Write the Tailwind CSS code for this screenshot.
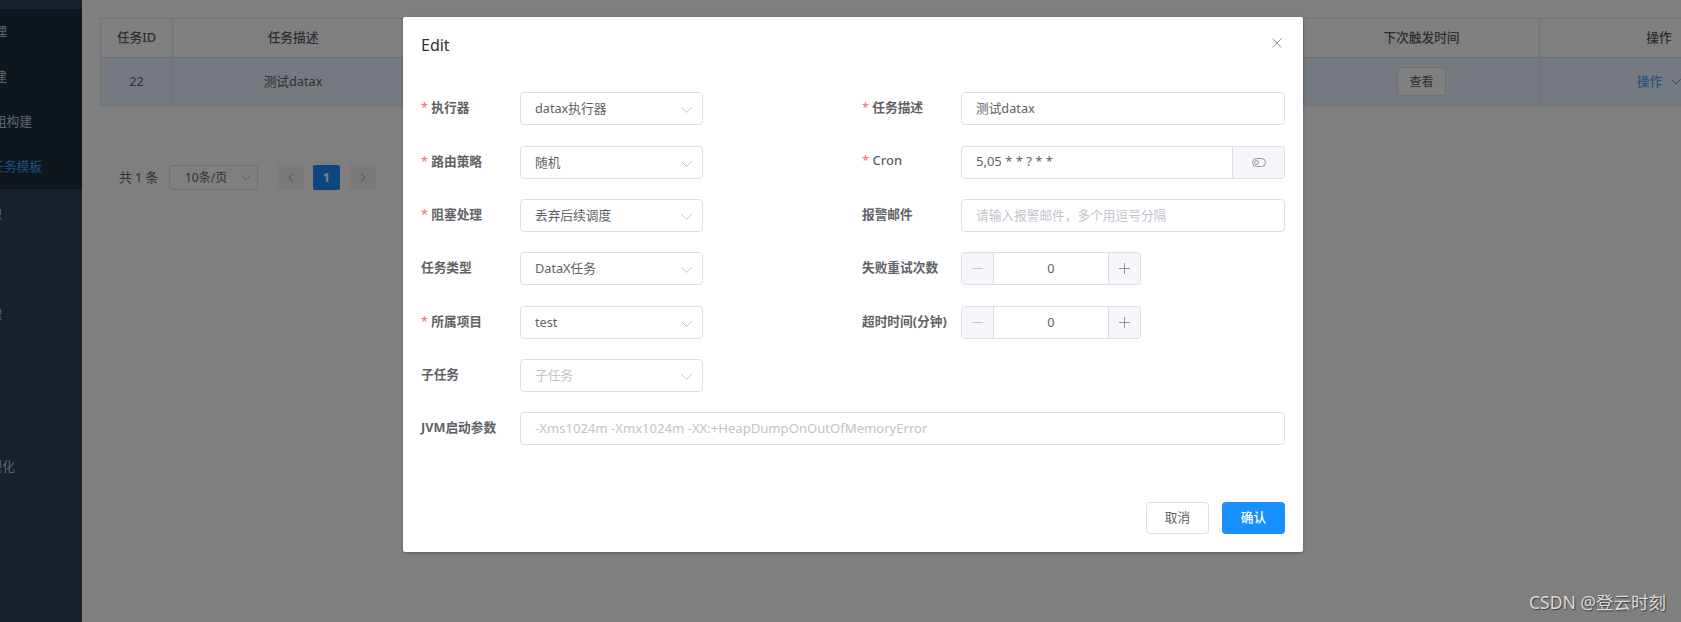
<!DOCTYPE html>
<html lang="zh-CN">
<head>
    <meta charset="UTF-8">
    <meta name="viewport" content="width=device-width, initial-scale=1.0">
    <title>任务模板</title>
    <script src="https://cdn.jsdelivr.net/npm/@tailwindcss/browser@4"></script>
</head>
<body class="bg-white font-['Noto_Sans','Noto_Sans_CJK_SC',sans-serif] text-[12.7px] text-[#606266]">
<div class="relative flex h-[622px] w-[1681px] overflow-hidden">

    <!-- sidebar, scrolled so that only the ends of the labels show -->
    <aside class="flex w-[82px] shrink-0 flex-col overflow-hidden bg-[#304156] pt-[9px] text-[#bfcbd9]">
        <div class="bg-[#1f2d3d]">
            <div class="flex h-[45px] items-center justify-end whitespace-nowrap pr-[75px]">任务管理</div>
            <div class="flex h-[45px] items-center justify-end whitespace-nowrap pr-[75px]">任务构建</div>
            <div class="flex h-[45px] items-center justify-end whitespace-nowrap pr-[50px]">任务组构建</div>
            <div class="flex h-[45px] items-center justify-end whitespace-nowrap pr-[40px] text-[#409eff]">任务模板</div>
        </div>
        <div class="flex h-[50.4px] items-center justify-end whitespace-nowrap pr-[80px]">项目管理</div>
        <div class="h-[50.4px]"></div>
        <div class="flex h-[50.4px] items-center justify-end whitespace-nowrap pr-[80px]">资源管理</div>
        <div class="h-[50.4px]"></div>
        <div class="h-[50.4px]"></div>
        <div class="flex h-[50.4px] items-center justify-end whitespace-nowrap pr-[67px]">可视化</div>
    </aside>

    <!-- job table and pagination -->
    <main class="min-w-0 flex-1 pl-[18px] pt-[18px]">
        <div class="w-[1678px] border-l border-t border-[#dfe6ec]">
            <div class="grid h-[39px] grid-cols-[72px_241px_890px_236px_239px] border-b border-[#dfe6ec] font-medium text-[#5c6066]">
                <div class="flex items-center justify-center border-r border-[#dfe6ec]">任务ID</div>
                <div class="flex items-center justify-center border-r border-[#dfe6ec]">任务描述</div>
                <div class="border-r border-[#dfe6ec]"></div>
                <div class="flex items-center justify-center border-r border-[#dfe6ec]">下次触发时间</div>
                <div class="flex items-center justify-center border-r border-[#dfe6ec]">操作</div>
            </div>
            <div class="grid h-[48px] grid-cols-[72px_241px_890px_236px_239px] border-b border-[#dfe6ec] bg-[#e8f4ff]">
                <div class="flex items-center justify-center border-r border-[#dfe6ec]">22</div>
                <div class="flex items-center justify-center border-r border-[#dfe6ec]">测试datax</div>
                <div class="border-r border-[#dfe6ec]"></div>
                <div class="flex items-center justify-center border-r border-[#dfe6ec]">
                    <button class="flex h-[29px] w-[49px] items-center justify-center rounded-[3px] border border-[#dcdfe6] bg-white text-[12px]">查看</button>
                </div>
                <div class="flex items-center justify-center gap-[9px] border-r border-[#dfe6ec] text-[#409eff]">
                    <span>操作</span>
                    <svg class="h-[6px] w-[10px]" viewBox="0 0 10 6" fill="none" stroke="currentColor"><path d="M0.5 0.5 5 5 9.5 0.5"/></svg>
                </div>
            </div>
        </div>

        <div class="ml-[19px] mt-[59px] flex h-[25px] items-center">
            <span class="w-[50px] whitespace-nowrap">共 1 条</span>
            <div class="flex h-[25px] w-[89px] items-center justify-between rounded-[3px] border border-[#dcdfe6] pl-[15px] pr-[6px]">
                <span class="whitespace-nowrap text-[12px]">10条/页</span>
                <svg class="h-[6px] w-[10px] text-[#c0c4cc]" viewBox="0 0 10 6" fill="none" stroke="currentColor"><path d="M0.5 0.5 5 5 9.5 0.5"/></svg>
            </div>
            <div class="ml-[19px] flex h-[25px] w-[27px] items-center justify-center rounded-[2px] bg-[#f4f4f5] text-[#c0c4cc]">
                <svg class="h-[9px] w-[6px]" viewBox="0 0 6 9" fill="none" stroke="currentColor" stroke-width="1.4"><path d="M5 0.5 1 4.5 5 8.5"/></svg>
            </div>
            <div class="ml-[9px] flex h-[25px] w-[27px] items-center justify-center rounded-[2px] bg-[#1890ff] font-bold text-white">1</div>
            <div class="ml-[9px] flex h-[25px] w-[27px] items-center justify-center rounded-[2px] bg-[#f4f4f5] text-[#c0c4cc]">
                <svg class="h-[9px] w-[6px]" viewBox="0 0 6 9" fill="none" stroke="currentColor" stroke-width="1.4"><path d="M1 0.5 5 4.5 1 8.5"/></svg>
            </div>
        </div>
    </main>

    <!-- dim layer -->
    <div class="absolute inset-0 bg-black/50"></div>

    <!-- Edit dialog -->
    <div class="absolute left-[403px] top-[17px] flex h-[535px] w-[900px] flex-col rounded-[2px] bg-white shadow-[0_1px_3px_rgba(0,0,0,0.3)]">
        <div class="flex h-[75.2px] shrink-0 items-start justify-between pl-[18px] pr-[21px] pt-[17px]">
            <h2 class="text-[16px] leading-[22px] text-[#303133]">Edit</h2>
            <svg class="mt-[4px] h-[10px] w-[10px] text-[#909399]" viewBox="0 0 10 10" fill="none" stroke="currentColor"><path d="M0.5 0.5 9.5 9.5M9.5 0.5 0.5 9.5"/></svg>
        </div>

        <form class="ml-[18px] grid w-[864px] grid-cols-[282px_423px] auto-rows-[33px] gap-x-[159px] gap-y-[20.35px]">
            <div class="flex items-center">
                <label class="w-[99px] shrink-0 pb-[2px] font-bold"><span class="font-normal text-[#f56c6c]">* </span>执行器</label>
                <div class="flex h-full flex-1 items-center justify-between rounded-[4px] border border-[#dcdfe6] pl-[14px] pr-[10px]">
                    <span>datax执行器</span>
                    <svg class="mt-[3px] h-[6px] w-[11px] text-[#c0c4cc]" viewBox="0 0 11 6" fill="none" stroke="currentColor"><path d="M0.5 0.5 5.5 5.5 10.5 0.5"/></svg>
                </div>
            </div>
            <div class="flex items-center">
                <label class="w-[99px] shrink-0 pb-[2px] font-bold"><span class="font-normal text-[#f56c6c]">* </span>任务描述</label>
                <div class="flex h-full flex-1 items-center rounded-[4px] border border-[#dcdfe6] pl-[14px]">测试datax</div>
            </div>

            <div class="flex items-center">
                <label class="w-[99px] shrink-0 pb-[2px] font-bold"><span class="font-normal text-[#f56c6c]">* </span>路由策略</label>
                <div class="flex h-full flex-1 items-center justify-between rounded-[4px] border border-[#dcdfe6] pl-[14px] pr-[10px]">
                    <span>随机</span>
                    <svg class="mt-[3px] h-[6px] w-[11px] text-[#c0c4cc]" viewBox="0 0 11 6" fill="none" stroke="currentColor"><path d="M0.5 0.5 5.5 5.5 10.5 0.5"/></svg>
                </div>
            </div>
            <div class="flex items-center">
                <label class="w-[99px] shrink-0 pb-[2px] text-[13px] font-medium"><span class="font-normal text-[#f56c6c]">* </span>Cron</label>
                <div class="flex h-full flex-1 rounded-[4px] border border-[#dcdfe6]">
                    <div class="flex flex-1 items-center pl-[14px] text-[13px]">5,05 * * ? * *</div>
                    <div class="flex w-[52px] items-center justify-center rounded-r-[4px] border-l border-[#dcdfe6] bg-[#f5f7fa] text-[#909399]">
                        <svg class="h-[9px] w-[14px]" viewBox="0 0 14 9" fill="none" stroke="currentColor"><rect x="0.5" y="0.5" width="13" height="8" rx="4"/><circle cx="4.5" cy="4.5" r="2"/></svg>
                    </div>
                </div>
            </div>

            <div class="flex items-center">
                <label class="w-[99px] shrink-0 pb-[2px] font-bold"><span class="font-normal text-[#f56c6c]">* </span>阻塞处理</label>
                <div class="flex h-full flex-1 items-center justify-between rounded-[4px] border border-[#dcdfe6] pl-[14px] pr-[10px]">
                    <span>丢弃后续调度</span>
                    <svg class="mt-[3px] h-[6px] w-[11px] text-[#c0c4cc]" viewBox="0 0 11 6" fill="none" stroke="currentColor"><path d="M0.5 0.5 5.5 5.5 10.5 0.5"/></svg>
                </div>
            </div>
            <div class="flex items-center">
                <label class="w-[99px] shrink-0 pb-[2px] font-bold">报警邮件</label>
                <div class="flex h-full flex-1 items-center rounded-[4px] border border-[#dcdfe6] pl-[14px] text-[#c0c4cc]">请输入报警邮件，多个用逗号分隔</div>
            </div>

            <div class="flex items-center">
                <label class="w-[99px] shrink-0 pb-[2px] font-bold">任务类型</label>
                <div class="flex h-full flex-1 items-center justify-between rounded-[4px] border border-[#dcdfe6] pl-[14px] pr-[10px]">
                    <span>DataX任务</span>
                    <svg class="mt-[3px] h-[6px] w-[11px] text-[#c0c4cc]" viewBox="0 0 11 6" fill="none" stroke="currentColor"><path d="M0.5 0.5 5.5 5.5 10.5 0.5"/></svg>
                </div>
            </div>
            <div class="flex items-center">
                <label class="w-[99px] shrink-0 pb-[2px] font-bold">失败重试次数</label>
                <div class="flex h-full w-[180px] rounded-[4px] border border-[#dcdfe6]">
                    <div class="flex w-[32px] items-center justify-center rounded-l-[4px] border-r border-[#dcdfe6] bg-[#f5f7fa] text-[#c0c4cc]">
                        <svg class="h-[11px] w-[11px]" viewBox="0 0 11 11" fill="none" stroke="currentColor"><path d="M0 5.5H11"/></svg>
                    </div>
                    <div class="flex flex-1 items-center justify-center">0</div>
                    <div class="flex w-[32px] items-center justify-center rounded-r-[4px] border-l border-[#dcdfe6] bg-[#f5f7fa] text-[#909399]">
                        <svg class="h-[11px] w-[11px]" viewBox="0 0 11 11" fill="none" stroke="currentColor"><path d="M0 5.5H11M5.5 0V11"/></svg>
                    </div>
                </div>
            </div>

            <div class="flex items-center">
                <label class="w-[99px] shrink-0 pb-[2px] font-bold"><span class="font-normal text-[#f56c6c]">* </span>所属项目</label>
                <div class="flex h-full flex-1 items-center justify-between rounded-[4px] border border-[#dcdfe6] pl-[14px] pr-[10px]">
                    <span>test</span>
                    <svg class="mt-[3px] h-[6px] w-[11px] text-[#c0c4cc]" viewBox="0 0 11 6" fill="none" stroke="currentColor"><path d="M0.5 0.5 5.5 5.5 10.5 0.5"/></svg>
                </div>
            </div>
            <div class="flex items-center">
                <label class="w-[99px] shrink-0 whitespace-nowrap pb-[2px] font-bold">超时时间(分钟)</label>
                <div class="flex h-full w-[180px] rounded-[4px] border border-[#dcdfe6]">
                    <div class="flex w-[32px] items-center justify-center rounded-l-[4px] border-r border-[#dcdfe6] bg-[#f5f7fa] text-[#c0c4cc]">
                        <svg class="h-[11px] w-[11px]" viewBox="0 0 11 11" fill="none" stroke="currentColor"><path d="M0 5.5H11"/></svg>
                    </div>
                    <div class="flex flex-1 items-center justify-center">0</div>
                    <div class="flex w-[32px] items-center justify-center rounded-r-[4px] border-l border-[#dcdfe6] bg-[#f5f7fa] text-[#909399]">
                        <svg class="h-[11px] w-[11px]" viewBox="0 0 11 11" fill="none" stroke="currentColor"><path d="M0 5.5H11M5.5 0V11"/></svg>
                    </div>
                </div>
            </div>

            <div class="col-start-1 flex items-center">
                <label class="w-[99px] shrink-0 pb-[2px] font-bold">子任务</label>
                <div class="flex h-full flex-1 items-center justify-between rounded-[4px] border border-[#dcdfe6] pl-[14px] pr-[10px] text-[#c0c4cc]">
                    <span>子任务</span>
                    <svg class="mt-[3px] h-[6px] w-[11px]" viewBox="0 0 11 6" fill="none" stroke="currentColor"><path d="M0.5 0.5 5.5 5.5 10.5 0.5"/></svg>
                </div>
            </div>

            <div class="col-span-2 flex items-center">
                <label class="w-[99px] shrink-0 pb-[2px] font-bold">JVM启动参数</label>
                <div class="flex h-full flex-1 items-center rounded-[4px] border border-[#dcdfe6] pl-[14px] text-[13.1px] text-[#c0c4cc]">-Xms1024m -Xmx1024m -XX:+HeapDumpOnOutOfMemoryError</div>
            </div>
        </form>

        <div class="mt-auto flex justify-end gap-[13px] pb-[18px] pr-[18px]">
            <button class="h-[32px] w-[63px] rounded-[4px] border border-[#dcdfe6] bg-white">取消</button>
            <button class="h-[32px] w-[63px] rounded-[4px] bg-[#1890ff] font-medium text-white">确认</button>
        </div>
    </div>

    <!-- watermark -->
    <div class="absolute bottom-[7px] right-[15px] text-[17.5px] text-[#d8d8d8] [text-shadow:1px_1px_1px_rgba(0,0,0,0.5)]">CSDN @登云时刻</div>
</div>
</body>
</html>
